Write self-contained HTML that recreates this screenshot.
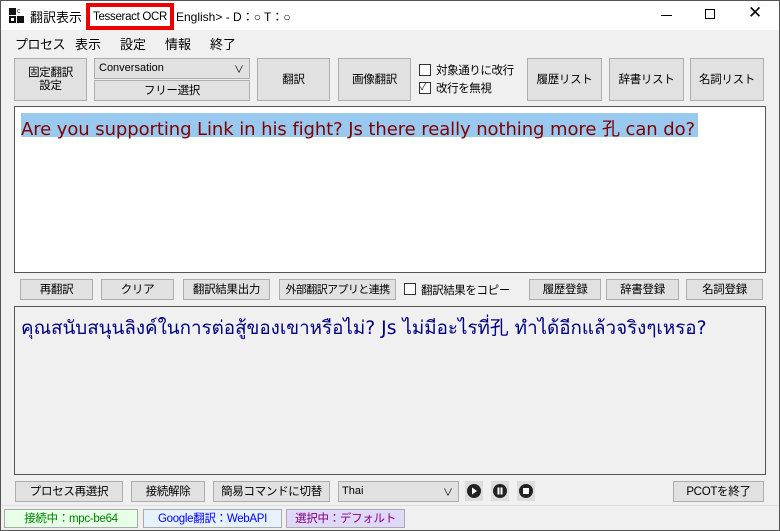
<!DOCTYPE html>
<html><head><meta charset="utf-8"><style>
*{box-sizing:border-box;margin:0;padding:0}
body{width:780px;height:531px;background:#f0f0f0;font-family:"Liberation Sans","Noto Sans CJK JP",sans-serif;font-size:12px;color:#000;position:relative;overflow:hidden}
.a{position:absolute;white-space:nowrap}
.btn{position:absolute;background:#e1e1e1;border:1px solid #adadad;display:flex;align-items:center;justify-content:center;text-align:center;font-size:11.5px;line-height:13px;white-space:nowrap;letter-spacing:-0.3px;padding-top:1px}
.cb{position:absolute;width:12px;height:12px;border:1px solid #333;background:#fff}
</style></head><body>
<div class="a" style="left:0;top:0;width:780px;height:531px;border:1px solid #555;z-index:9"></div>
<div class="a" style="left:0;top:0;width:780px;height:30px;background:#fff"></div>
<div class="a" style="left:9px;top:8px;width:7px;height:7px;background:#111"></div>
<div class="a" style="left:17px;top:8px;width:7px;height:7px;color:#111;font-size:7px;line-height:7px">c</div>
<div class="a" style="left:9px;top:16px;width:7px;height:7px;border:2px solid #111"></div>
<div class="a" style="left:17px;top:16px;width:7px;height:7px;background:#111"></div>
<div class="a" style="left:30px;top:7px;font-size:13px">翻訳表示</div>
<div class="a" style="left:86px;top:3px;width:88px;height:27px;border:4px solid #e00;background:#fff;font-size:11.5px;padding:4px 0 0 3px;letter-spacing:-0.3px">Tesseract OCR</div>
<div class="a" style="left:176px;top:8px;font-size:12px">English&gt; - D：○ T：○</div>
<div class="a" style="left:661px;top:15px;width:11px;height:1px;background:#000"></div>
<div class="a" style="left:705px;top:9px;width:10px;height:10px;border:1px solid #000"></div>
<div class="a" style="left:748px;top:3px;font-size:17px;font-weight:100">✕</div>
<div class="a" style="left:15px;top:34px;font-size:13px;letter-spacing:-0.5px">プロセス</div>
<div class="a" style="left:75px;top:34px;font-size:13px">表示</div>
<div class="a" style="left:120px;top:34px;font-size:13px">設定</div>
<div class="a" style="left:165px;top:34px;font-size:13px">情報</div>
<div class="a" style="left:210px;top:34px;font-size:13px">終了</div>

<div class="btn" style="left:14px;top:58px;width:73px;height:43px">固定翻訳<br>設定</div>
<div class="a" style="left:94px;top:58px;width:156px;height:21px;border:1px solid #adadad;background:#e1e1e1;padding:3px 4px;font-size:11px">Conversation<span style="position:absolute;right:5px;top:2px;font-size:10px">∨</span></div>
<div class="btn" style="left:94px;top:80px;width:156px;height:21px">フリー選択</div>
<div class="btn" style="left:257px;top:58px;width:73px;height:43px">翻訳</div>
<div class="btn" style="left:338px;top:58px;width:73px;height:43px">画像翻訳</div>
<div class="cb" style="left:419px;top:64px"></div>
<div class="a" style="left:436px;top:62px;font-size:11.5px;letter-spacing:-0.4px">対象通りに改行</div>
<div class="cb" style="left:419px;top:82px;font-size:10px;line-height:10px;color:#333">✓</div>
<div class="a" style="left:436px;top:80px;font-size:11.5px;letter-spacing:-0.4px">改行を無視</div>
<div class="btn" style="left:527px;top:58px;width:75px;height:43px">履歴リスト</div>
<div class="btn" style="left:609px;top:58px;width:75px;height:43px">辞書リスト</div>
<div class="btn" style="left:690px;top:58px;width:74px;height:43px">名詞リスト</div>

<div class="a" style="left:14px;top:106px;width:752px;height:167px;background:#fff;border:1px solid #555"></div>
<div class="a" style="left:21px;top:113px;width:677px;height:24px;background:#99c9ef"></div>
<div class="a" style="left:21px;top:115px;font-size:18px;color:#800000;font-family:'DejaVu Sans','Noto Sans CJK JP',sans-serif;letter-spacing:-0.08px">Are you supporting Link in his fight? Js there really nothing more 孔 can do?</div>

<div class="btn" style="left:20px;top:279px;width:73px;height:21px">再翻訳</div>
<div class="btn" style="left:101px;top:279px;width:73px;height:21px">クリア</div>
<div class="btn" style="left:183px;top:279px;width:87px;height:21px">翻訳結果出力</div>
<div class="btn" style="left:279px;top:279px;width:117px;height:21px;font-size:11px;letter-spacing:-0.6px">外部翻訳アプリと連携</div>
<div class="cb" style="left:404px;top:283px"></div>
<div class="a" style="left:421px;top:282px;font-size:11.5px;letter-spacing:-0.4px">翻訳結果をコピー</div>
<div class="btn" style="left:529px;top:279px;width:72px;height:21px">履歴登録</div>
<div class="btn" style="left:606px;top:279px;width:73px;height:21px">辞書登録</div>
<div class="btn" style="left:686px;top:279px;width:77px;height:21px">名詞登録</div>

<div class="a" style="left:14px;top:306px;width:752px;height:169px;background:#f0f0f0;border:1px solid #555"></div>
<div class="a" style="left:21px;top:313px;font-size:18.8px;color:#000080;font-family:'DejaVu Sans','Noto Sans CJK JP',sans-serif">คุณสนับสนุนลิงค์ในการต่อสู้ของเขาหรือไม่? Js ไม่มีอะไรที่孔 ทำได้อีกแล้วจริงๆเหรอ?</div>

<div class="btn" style="left:15px;top:481px;width:108px;height:21px">プロセス再選択</div>
<div class="btn" style="left:131px;top:481px;width:74px;height:21px">接続解除</div>
<div class="btn" style="left:213px;top:481px;width:117px;height:21px">簡易コマンドに切替</div>
<div class="a" style="left:338px;top:481px;width:121px;height:21px;border:1px solid #adadad;background:#e1e1e1;padding:3px 3px;font-size:11px">Thai<span style="position:absolute;right:5px;top:2px;font-size:10px">∨</span></div>
<div class="a" style="left:465px;top:481px;width:18px;height:20px;background:#ddd"><svg width="18" height="20"><circle cx="9" cy="10" r="7" fill="#222"/><path d="M7 6.5v7l5-3.5z" fill="#fff"/></svg></div>
<div class="a" style="left:491px;top:481px;width:18px;height:20px;background:#ddd"><svg width="18" height="20"><circle cx="9" cy="10" r="7" fill="#222"/><rect x="6.5" y="6.5" width="2" height="7" fill="#fff"/><rect x="9.5" y="6.5" width="2" height="7" fill="#fff"/></svg></div>
<div class="a" style="left:517px;top:481px;width:18px;height:20px;background:#ddd"><svg width="18" height="20"><circle cx="9" cy="10" r="7" fill="#222"/><rect x="6" y="7" width="6" height="6" fill="#fff"/></svg></div>
<div class="btn" style="left:673px;top:481px;width:91px;height:21px">PCOTを終了</div>

<div class="a" style="left:0;top:505px;width:780px;height:1px;background:#ddd"></div>
<div class="btn" style="left:4px;top:509px;width:134px;height:19px;background:#e6ffe6;border-color:#aaa;color:#008000">接続中：mpc-be64</div>
<div class="btn" style="left:143px;top:509px;width:139px;height:19px;background:#e6f3ff;border-color:#aaa;color:#0000ff">Google翻訳：WebAPI</div>
<div class="btn" style="left:286px;top:509px;width:119px;height:19px;background:#e0d8f8;border-color:#aaa;color:#800080">選択中：デフォルト</div>
</body></html>
